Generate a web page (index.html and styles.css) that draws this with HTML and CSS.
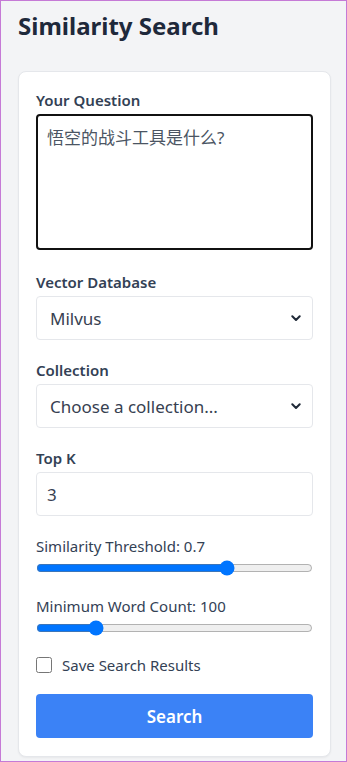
FILE: index.html
```html
<!DOCTYPE html>
<html lang="en">

<head>
    <meta charset="UTF-8">
    <meta name="viewport" content="width=device-width, initial-scale=1.0">
    <title>Similarity Search</title>

    <link rel="stylesheet" href="styles.css">

</head>

<body>
    <div class="page">
        <h1 class="title">Similarity Search</h1>

        <form class="card">
            <div class="group first">
                <label class="label strong" for="question">Your Question</label>
                <textarea id="question" class="field question">悟空的战斗工具是什么?</textarea>
            </div>

            <div class="group">
                <label class="label strong" for="db">Vector Database</label>
                <div class="select-wrap">
                    <select id="db" class="field select">
                        <option>Milvus</option>
                    </select>
                    <svg class="chevron" width="10" height="7" viewBox="0 0 10 7">
                        <path d="M1.3 1.3 L5 5 L8.7 1.3" fill="none" stroke="#1f2937" stroke-width="2" stroke-linecap="round" stroke-linejoin="round" />
                    </svg>
                </div>
            </div>

            <div class="group">
                <label class="label strong" for="collection">Collection</label>
                <div class="select-wrap">
                    <select id="collection" class="field select">
                        <option>Choose a collection...</option>
                    </select>
                    <svg class="chevron" width="10" height="7" viewBox="0 0 10 7">
                        <path d="M1.3 1.3 L5 5 L8.7 1.3" fill="none" stroke="#1f2937" stroke-width="2" stroke-linecap="round" stroke-linejoin="round" />
                    </svg>
                </div>
            </div>

            <div class="group">
                <label class="label strong" for="topk">Top K</label>
                <input id="topk" class="field" type="number" value="3">
            </div>

            <div class="group">
                <label class="label" for="threshold">Similarity Threshold: 0.7</label>
                <input id="threshold" class="range" type="range" min="0" max="1" step="0.1" value="0.7">
            </div>

            <div class="group">
                <label class="label" for="wordcount">Minimum Word Count: 100</label>
                <input id="wordcount" class="range" type="range" min="0" max="500" step="10" value="100">
            </div>

            <div class="check-row">
                <input id="save" class="check" type="checkbox">
                <label for="save">Save Search Results</label>
            </div>

            <button class="btn" type="button">Search</button>
        </form>
    </div>
</body>

</html>
```

FILE: styles.css
```css
* {
    box-sizing: border-box;
}

html,
body {
    margin: 0;
    height: 100%;
}

body {
    border: 1px solid #c57ad6;
    background-color: #f3f4f6;
    font-family: "Noto Sans", "Noto Sans CJK SC", sans-serif;
    color: #1f2937;
}

.page {
    padding: 5px 15px 0 17px;
}

.title {
    margin: 0 0 25px;
    font-size: 24px;
    line-height: 40px;
    font-weight: 700;
    color: #1e293b;
}

.card {
    background-color: #fff;
    border: 1px solid #e5e7eb;
    border-radius: 8px;
    box-shadow: 0 1px 2px rgba(0, 0, 0, 0.05);
    padding: 17px 17px 18px;
}

.group {
    margin-bottom: 19px;
}

.group.first {
    margin-bottom: 21px;
}

.label {
    display: block;
    margin-bottom: 3px;
    font-size: 15px;
    line-height: 22px;
    color: #334155;
}

.label.strong {
    font-weight: 600;
}

.field {
    display: block;
    width: 100%;
    height: 44px;
    padding: 0 10px;
    border: 1px solid #e5e7eb;
    border-radius: 4px;
    background-color: #fff;
    font-family: inherit;
    font-size: 17px;
    color: #374151;
    outline: none;
}

.question {
    height: 136px;
    padding: 8px 9px;
    border: 2px solid #111;
    border-radius: 4px;
    resize: none;
    color: #4b5563;
}

input[type="number"]::-webkit-inner-spin-button {
    -webkit-appearance: none;
}

.select-wrap {
    position: relative;
}

.select {
    -webkit-appearance: none;
    appearance: none;
    padding-left: 13px;
}

.chevron {
    position: absolute;
    right: 12px;
    top: 19px;
}

.range {
    display: block;
    width: 100%;
    margin: 1px 0 0;
    height: 16px;
}

.check-row {
    display: flex;
    align-items: center;
    gap: 10px;
    margin-bottom: 19px;
    font-size: 15px;
    color: #334155;
}

.check {
    width: 16px;
    height: 16px;
    margin: 0;
}

.btn {
    display: block;
    width: 100%;
    height: 44px;
    border: none;
    border-radius: 4px;
    background-color: #3b82f6;
    color: #fff;
    font-family: inherit;
    font-size: 17px;
    font-weight: 600;
}
```
